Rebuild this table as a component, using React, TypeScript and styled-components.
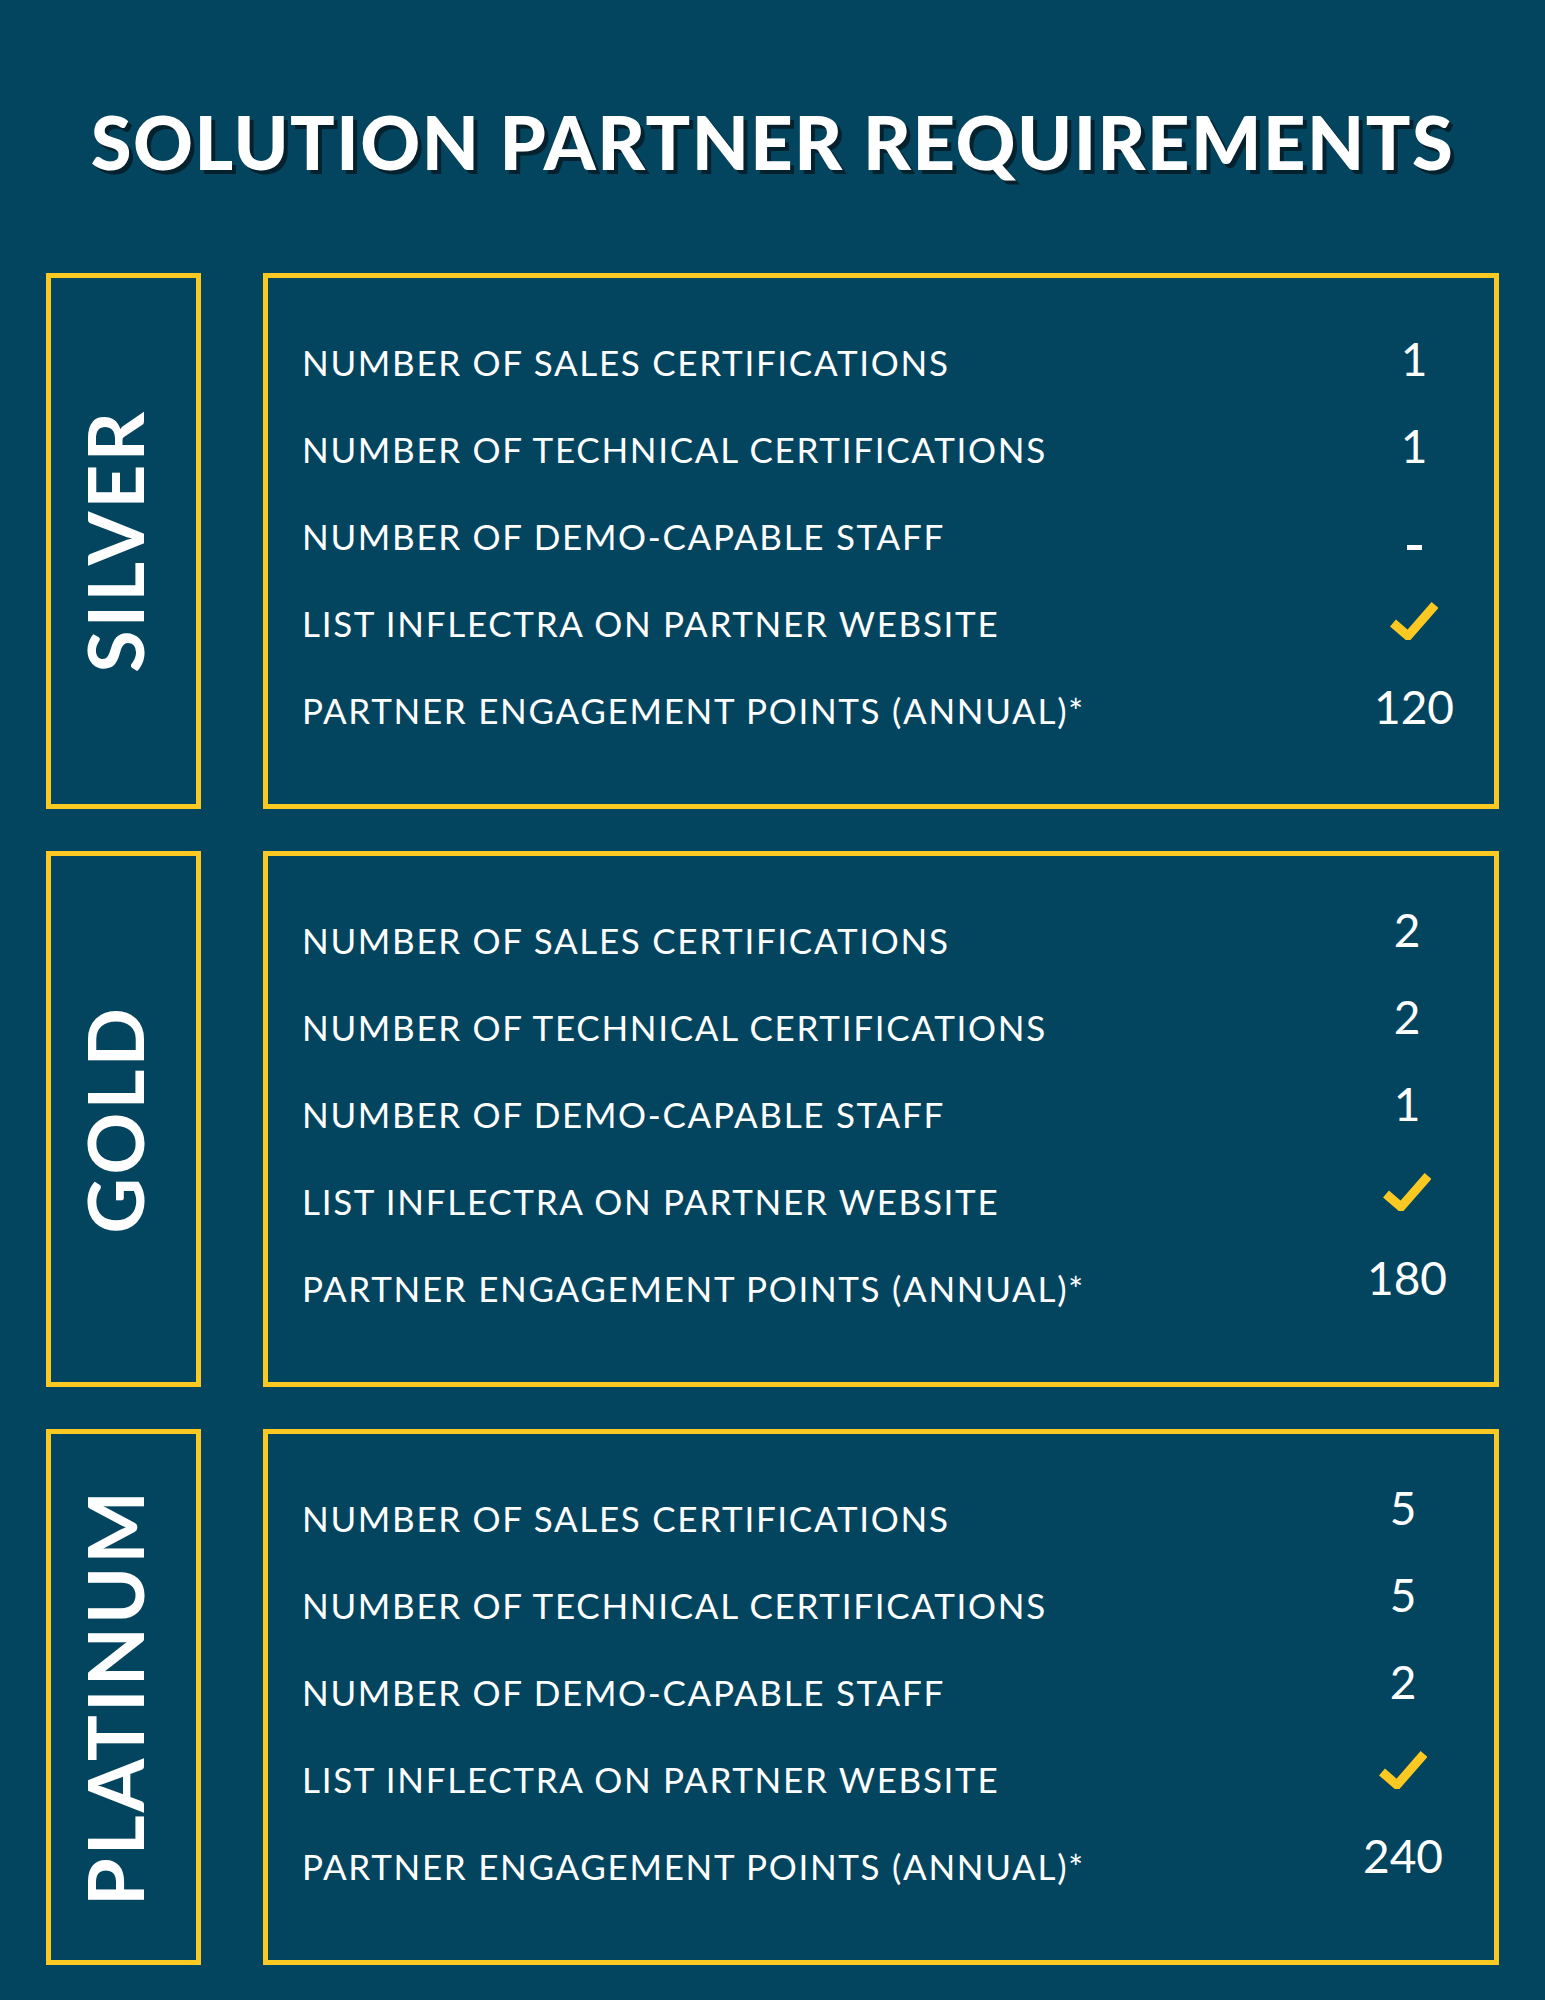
import * as React from "react";
import styled, { createGlobalStyle } from "styled-components";

const GlobalStyle = createGlobalStyle`
	html, body {
		margin: 0;
		padding: 0;
		background: #03455f;
	}
	* {
		box-sizing: border-box;
	}
`;

const YELLOW = "#fcc923";

type Value = string | "check" | "dash";

interface Tier {
	name: string;
	values: Value[];
	lift: number;
	shift: number;
}

const REQUIREMENTS = [
	"NUMBER OF SALES CERTIFICATIONS",
	"NUMBER OF TECHNICAL CERTIFICATIONS",
	"NUMBER OF DEMO-CAPABLE STAFF",
	"LIST INFLECTRA ON PARTNER WEBSITE",
	"PARTNER ENGAGEMENT POINTS (ANNUAL)*",
];

const TIERS: Tier[] = [
	{ name: "SILVER", values: ["1", "1", "dash", "check", "120"], lift: 4, shift: 4 },
	{ name: "GOLD", values: ["2", "2", "1", "check", "180"], lift: 11, shift: -3 },
	{ name: "PLATINUM", values: ["5", "5", "2", "check", "240"], lift: 11, shift: -7 },
];

function CheckMark() {
	return (
		<svg width="48" height="40" viewBox="0 0 48 40">
			<path d="M3 23 L18 36 L45 5" fill="none" stroke={YELLOW} strokeWidth="9" strokeLinejoin="miter" />
		</svg>
	);
}

export default function App() {
	return (
		<Page>
			<GlobalStyle />
			<Title>SOLUTION PARTNER REQUIREMENTS</Title>
			<TierList>
				{TIERS.map((tier) => (
					<TierRow key={tier.name}>
						<LabelBox>
							<LabelText>{tier.name}</LabelText>
						</LabelBox>
						<Panel>
							{REQUIREMENTS.map((req, i) => {
								const v = tier.values[i];
								return (
									<Row key={req}>
										<ReqText>{req}</ReqText>
										<ValueCell $lift={tier.lift} $shift={tier.shift}>
											{v === "check" ? <CheckMark /> : v === "dash" ? <Dash /> : v}
										</ValueCell>
									</Row>
								);
							})}
						</Panel>
					</TierRow>
				))}
			</TierList>
		</Page>
	);
}

const Page = styled.div`
	width: 1545px;
	min-height: 2000px;
	background: #03455f;
	padding: 105px 46px 38px;
	font-family: Lato, "Open Sans", sans-serif;
	color: #ffffff;
`;

const Title = styled.h1`
	margin: 0 0 94px;
	text-align: center;
	font-family: Lato, sans-serif;
	font-weight: 900;
	font-size: 74px;
	line-height: 1;
	letter-spacing: 1.5px;
	color: #ffffff;
	text-shadow: 4px 4px 0 #06212e;
`;

const TierList = styled.div`
	display: flex;
	flex-direction: column;
	gap: 42px;
`;

const TierRow = styled.div`
	display: grid;
	grid-template-columns: 155px 1fr;
	column-gap: 62px;
	height: 536px;
`;

const LabelBox = styled.div`
	border: 5px solid ${YELLOW};
	padding-right: 18px;
	display: flex;
	align-items: center;
	justify-content: center;
`;

const LabelText = styled.div`
	writing-mode: vertical-rl;
	transform: rotate(180deg);
	font-weight: 700;
	font-size: 77px;
	line-height: 1;
	letter-spacing: 3px;
	color: #ffffff;
`;

const Panel = styled.div`
	border: 5px solid ${YELLOW};
	padding: 41px 24px 0 34px;
	display: flex;
	flex-direction: column;
`;

const Row = styled.div`
	height: 87px;
	display: flex;
	align-items: center;
	justify-content: space-between;
`;

const ReqText = styled.span`
	font-size: 35px;
	font-weight: 400;
	line-height: 1;
	letter-spacing: 1.7px;
	white-space: nowrap;
`;

const ValueCell = styled.span<{ $lift: number; $shift: number }>`
	width: 120px;
	display: flex;
	justify-content: center;
	align-items: center;
	font-size: 46px;
	font-weight: 400;
	line-height: 1;
	transform: translate(${(p) => p.$shift}px, -${(p) => p.$lift}px);
`;

const Dash = styled.span`
	display: block;
	width: 15px;
	height: 5px;
	background: #ffffff;
	margin-top: 30px;
`;
